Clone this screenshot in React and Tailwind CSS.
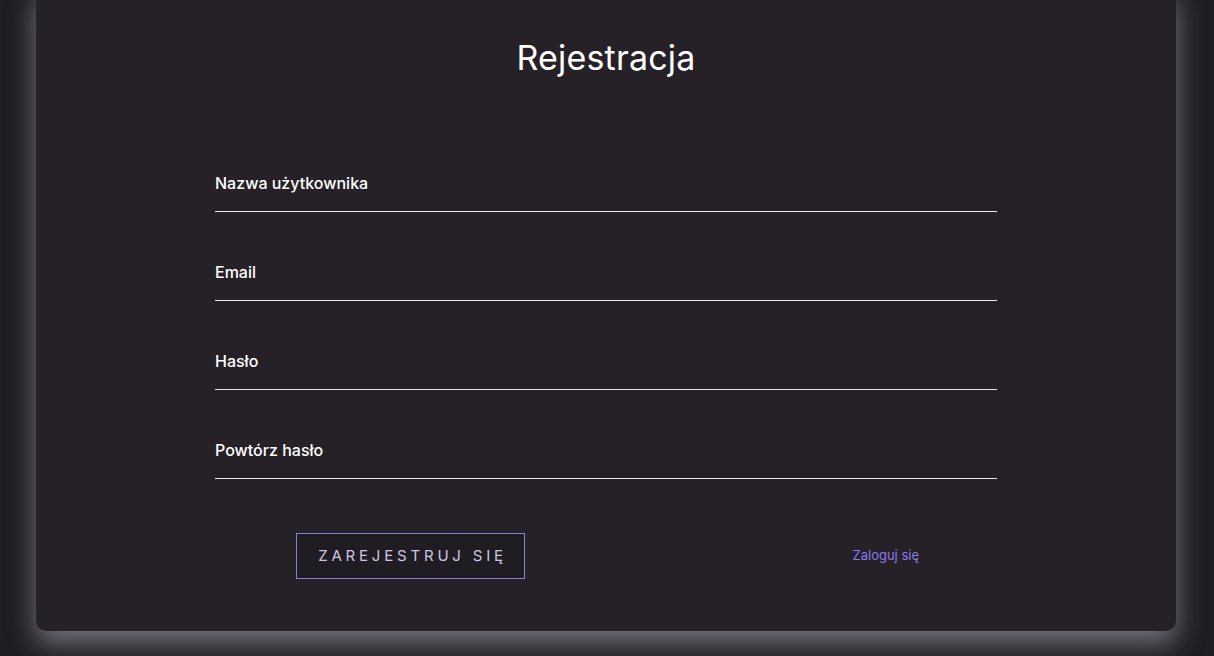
import React from "react";

const fields = ["Nazwa użytkownika", "Email", "Hasło", "Powtórz hasło"];

export default function App() {
  return (
    <div
      className="min-h-screen h-[656px] overflow-hidden bg-[#1e1e22] pl-[36px] pr-[38px]"
      style={{ fontFamily: "Inter, 'Noto Sans', sans-serif" }}
    >
      <div className="-mt-4 rounded-[10px] bg-[#252127] pt-[50px] pb-[52px] shadow-[0_12px_28px_rgba(190,188,200,0.55)]">
        <h1 className="text-center text-[34px] leading-[48px] font-normal tracking-[0.2px] text-white">
          Rejestracja
        </h1>

        <form className="mx-auto mt-[41px] w-[782px]">
          {fields.map((f) => (
            <div key={f} className="flex h-[89px] items-end border-b border-[#e8e6ea]">
              <span className="pb-[17px] text-[16px] leading-[22px] font-medium text-white">{f}</span>
            </div>
          ))}

          <div className="mt-[54px] flex items-center justify-between pl-[81px] pr-[78px]">
            <button
              type="button"
              className="h-[46px] w-[229px] border border-[#8a7fd6] bg-[#1f1c22] pl-[4px] text-[15px] tracking-[3.8px] text-[#cfc6e6]"
            >
              ZAREJESTRUJ SIĘ
            </button>
            <a className="text-[13px] text-[#8b78ea]">Zaloguj się</a>
          </div>
        </form>
      </div>
    </div>
  );
}
